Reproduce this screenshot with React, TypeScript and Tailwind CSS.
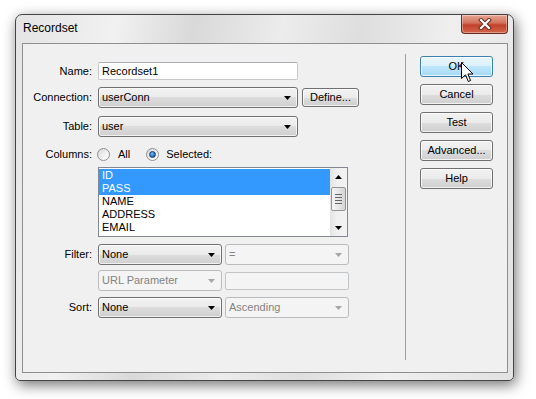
import React from "react";

const font = { fontFamily: '"Liberation Sans", Arial, sans-serif' };

function Arrow({ color = "#000", up = false }: { color?: string; up?: boolean }) {
  return (
    <svg width="7" height="4" viewBox="0 0 7 4" className="shrink-0">
      <path d={up ? "M0 4 L3.5 0 L7 4 Z" : "M0 0 L7 0 L3.5 4 Z"} fill={color} />
    </svg>
  );
}

function Combo({ w, text, disabled }: { w: string; text: string; disabled?: boolean }) {
  return (
    <div
      className={`${w} flex h-[21px] items-center justify-between rounded-[3px] border pl-[3px] pr-[6px] ${
        disabled
          ? "border-[#b9bcbf] bg-[#f4f4f4] text-[#838383]"
          : "border-[#707070] bg-[linear-gradient(#f2f2f2,#ebebeb_50%,#dddddd_50%,#cfcfcf)] text-black shadow-[inset_0_0_0_1px_rgba(255,255,255,0.7)]"
      }`}
    >
      <span>{text}</span>
      <Arrow color={disabled ? "#a6a6a6" : "#000"} />
    </div>
  );
}

function Label({ children }: { children: React.ReactNode }) {
  return <div className="w-[70px] shrink-0 pr-px text-right">{children}</div>;
}

function Radio({ checked }: { checked?: boolean }) {
  return (
    <div className="flex h-[13px] w-[13px] shrink-0 items-center justify-center rounded-full border border-[#8e8f8f] bg-[linear-gradient(135deg,#d6d6d6,#f4f4f4_60%,#ffffff)]">
      {checked && (
        <div className="h-[7px] w-[7px] rounded-full border border-[#1b3f66] bg-[radial-gradient(circle_at_40%_35%,#7ec4f5,#2b79c2_55%,#113c6b)]" />
      )}
    </div>
  );
}

function WinButton({ label, hot }: { label: string; hot?: boolean }) {
  return (
    <div
      className={`flex h-[21px] w-[73px] items-center justify-center rounded-[3px] border shadow-[inset_0_0_0_1px_rgba(255,255,255,0.75)] ${
        hot
          ? "border-[#3c7fb1] bg-[linear-gradient(#eaf6fd,#d9f0fc_50%,#bee6fd_50%,#a7d9f5)]"
          : "border-[#707070] bg-[linear-gradient(#f2f2f2,#ebebeb_50%,#dddddd_50%,#cfcfcf)]"
      }`}
    >
      {label}
    </div>
  );
}

const columns = [
  { name: "ID", sel: true },
  { name: "PASS", sel: true },
  { name: "NAME" },
  { name: "ADDRESS" },
  { name: "EMAIL" },
];

export default function App() {
  return (
    <div className="h-[399px] w-[536px] overflow-hidden bg-white pl-[15px] pt-[14px]" style={font}>
      {/* Window */}
      <div className="relative flex h-[367px] w-[499px] flex-col rounded-t-[7px] rounded-b-[5px] border border-[#454545] bg-[linear-gradient(100deg,#e4e4e4,#f1f1f1_18%,#d9d9d9_32%,#ececec_48%,#dedede_62%,#efefef_78%,#e2e2e2)] shadow-[2px_4px_14px_rgba(0,0,0,0.55)]">
        {/* Title bar */}
        <div className="flex h-[28px] shrink-0 items-start justify-between pl-[7px] pr-[5px]">
          <div className="pt-[6px] text-[12px] leading-[15px] text-black">Recordset</div>
          <div className="flex h-[19px] w-[47px] items-center justify-center rounded-b-[4px] border border-t-0 border-[#6b2a1d] bg-[linear-gradient(#e7a693,#d2705a_45%,#c1412a_55%,#d2654b)] shadow-[inset_0_0_0_1px_rgba(255,255,255,0.35)]">
            <svg width="14" height="12" viewBox="0 0 14 12">
              <path d="M3 2 L11 10 M11 2 L3 10" stroke="#5a2a20" strokeWidth="4" strokeLinecap="square" />
              <path d="M3 2 L11 10 M11 2 L3 10" stroke="#ffffff" strokeWidth="2.2" strokeLinecap="square" />
            </svg>
          </div>
        </div>

        {/* Client area */}
        <div className="mb-[7px] ml-[6px] mr-[5px] flex flex-1 border border-[#8f8f8f] bg-[#f0f0f0] text-[11px] text-black">
          {/* Form */}
          <div className="flex w-[382px] flex-col pt-[18px]">
            <div className="flex h-[18px] items-center">
              <Label>Name:</Label>
              <div className="ml-[5px] flex h-[18px] w-[200px] items-center rounded-[2px] border border-[#c6c8cc] border-t-[#abadb3] bg-white pl-[3px]">
                Recordset1
              </div>
            </div>

            <div className="mt-[7px] flex h-[21px] items-center">
              <Label>Connection:</Label>
              <div className="ml-[5px]">
                <Combo w="w-[200px]" text="userConn" />
              </div>
              <div className="ml-[4px] flex h-[19px] w-[57px] items-center justify-center rounded-[3px] border border-[#707070] bg-[linear-gradient(#f2f2f2,#ebebeb_50%,#dddddd_50%,#cfcfcf)] shadow-[inset_0_0_0_1px_rgba(255,255,255,0.75)]">
                Define...
              </div>
            </div>

            <div className="mt-[8px] flex h-[21px] items-center">
              <Label>Table:</Label>
              <div className="ml-[5px]">
                <Combo w="w-[200px]" text="user" />
              </div>
            </div>

            <div className="mt-[7px] flex h-[21px] items-center">
              <Label>Columns:</Label>
              <div className="ml-[4px] flex items-center">
                <Radio />
                <span className="ml-[8px]">All</span>
                <div className="ml-[16px]">
                  <Radio checked />
                </div>
                <span className="ml-[7px]">Selected:</span>
              </div>
            </div>

            {/* Column list */}
            <div className="mt-[2px] flex">
              <div className="w-[75px] shrink-0" />
              <div className="flex h-[70px] w-[250px] border border-[#828790] bg-white">
                <div className="flex-1 pt-px">
                  {columns.map((c) => (
                    <div
                      key={c.name}
                      className={`h-[13px] pl-[3px] leading-[13px] ${c.sel ? "bg-[#3399ff] text-white" : ""}`}
                    >
                      {c.name}
                    </div>
                  ))}
                </div>
                <div className="flex w-[17px] flex-col bg-[linear-gradient(to_right,#e3e3e3,#f0f0f0_40%,#f3f3f3)]">
                  <div className="flex h-[17px] items-center justify-center">
                    <Arrow up />
                  </div>
                  <div className="mx-auto mt-[2px] flex h-[24px] w-[15px] flex-col items-center justify-center gap-[2px] rounded-[2px] border border-[#959595] bg-[linear-gradient(to_right,#f4f4f4,#e6e6e6_50%,#d4d4d4)]">
                    <div className="h-px w-[7px] bg-[#666]" />
                    <div className="h-px w-[7px] bg-[#666]" />
                    <div className="h-px w-[7px] bg-[#666]" />
                    <div className="h-px w-[7px] bg-[#666]" />
                  </div>
                  <div className="flex-1" />
                  <div className="flex h-[17px] items-center justify-center">
                    <Arrow />
                  </div>
                </div>
              </div>
            </div>

            <div className="mt-[7px] flex h-[21px] items-center">
              <Label>Filter:</Label>
              <div className="ml-[5px] flex gap-[3px]">
                <Combo w="w-[124px]" text="None" />
                <Combo w="w-[124px]" text="=" disabled />
              </div>
            </div>

            <div className="mt-[5px] flex h-[21px] items-center">
              <div className="w-[70px] shrink-0" />
              <div className="ml-[5px] flex items-center gap-[3px]">
                <Combo w="w-[124px]" text="URL Parameter" disabled />
                <div className="h-[18px] w-[124px] rounded-[2px] border border-[#c2c5c8] bg-[#f4f4f4]" />
              </div>
            </div>

            <div className="mt-[6px] flex h-[21px] items-center">
              <Label>Sort:</Label>
              <div className="ml-[5px] flex gap-[3px]">
                <Combo w="w-[124px]" text="None" />
                <Combo w="w-[124px]" text="Ascending" disabled />
              </div>
            </div>
          </div>

          {/* Separator */}
          <div className="mb-[12px] mt-[10px] w-px bg-[#a0a0a0]" />

          {/* Buttons */}
          <div className="relative ml-[14px] flex flex-col gap-[7px] pt-[12px]">
            <WinButton label="OK" hot />
            <WinButton label="Cancel" />
            <WinButton label="Test" />
            <WinButton label="Advanced..." />
            <WinButton label="Help" />
            {/* Mouse cursor */}
            <svg
              className="absolute left-[41px] top-[18px]"
              width="13"
              height="21"
              viewBox="0 0 13 21"
            >
              <path
                d="M0.5 0.5 L0.5 16.5 L4.5 12.8 L7.3 19.5 L9.6 18.5 L6.9 12 L12 12 Z"
                fill="#ffffff"
                stroke="#000000"
                strokeWidth="1"
                strokeLinejoin="miter"
              />
            </svg>
          </div>
        </div>
      </div>
    </div>
  );
}
